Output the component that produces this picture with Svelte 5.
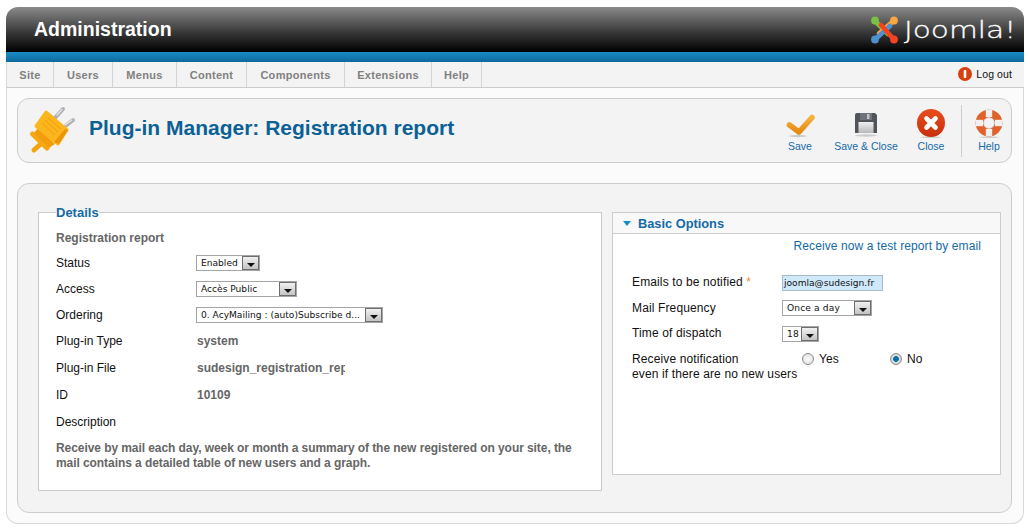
<script>
  const nav = [['Site',47],['Users',59],['Menus',64],['Content',70],['Components',98],['Extensions',87],['Help',50]];
</script>

<div class="page">
  <header class="head">
    <h1>Administration</h1>
    <div class="logo">
      <svg class="jm" width="29" height="30" viewBox="0 0 29 30" fill="none" stroke-width="4.6" stroke-linecap="round">
        <path d="M5 6 L18 19" stroke="#7ac143"/>
        <circle cx="5" cy="5.5" r="3.9" fill="#7ac143"/>
        <path d="M24 5.5 L9 18.5" stroke="#f9a541"/>
        <circle cx="24" cy="5.5" r="3.9" fill="#f9a541"/>
        <path d="M5 24.5 L20 11" stroke="#5091cd"/>
        <circle cx="5" cy="24.5" r="3.9" fill="#5091cd"/>
        <path d="M24 24.5 L11 10" stroke="#f44321"/>
        <circle cx="24" cy="24.5" r="3.9" fill="#f44321"/>
      </svg>
      <span class="jt">Joomla!</span>
    </div>
  </header>
  <div class="strip"></div>
  <nav class="nav">
    <ul>
      {#each nav as [n, w]}
        <li style="width:{w}px">{n}</li>
      {/each}
    </ul>
    <div class="logout">
      <svg width="14" height="14" viewBox="0 0 14 14"><circle cx="7" cy="7" r="7" fill="#d8400f"/><rect x="5.7" y="3" width="2.6" height="8" rx="1" fill="#fff"/></svg>
      <span>Log out</span>
    </div>
  </nav>

  <main class="main">
    <section class="toolbar">
      <svg class="plug" width="48" height="48" viewBox="0 0 48 48">
        <g stroke-linecap="round">
          <path d="M27 12 L35 3" stroke="#b0b0b0" stroke-width="4"/>
          <path d="M35 22 L45 14" stroke="#b0b0b0" stroke-width="4"/>
          <path d="M29 9 L34 3.5 M37 19 L44 14" stroke="#e8e8e8" stroke-width="1.2"/>
        </g>
        <path d="M15 36 L6 44" stroke="#f5a20f" stroke-width="5" stroke-linecap="round"/>
        <path d="M4.5 28 L19 42" stroke="#f7a712" stroke-width="5" stroke-linecap="round"/>
        <path d="M10 22 L27 38 L21 42 L6 27 Z" fill="#f29d0c"/>
        <path d="M18 6 L39 24 L30 38 L8 20 Z" fill="#fcb61d" stroke="#fcb61d" stroke-width="3" stroke-linejoin="round"/>
        <path d="M17 14 L30 26 M20 12 L33 23 M14 17 L27 29" stroke="#f09c0c" stroke-width="1"/>
        <path d="M40 24 L31 38 L26 36 L37 23 Z" fill="#ee9409"/>
      </svg>
      <h2>Plug-in Manager: Registration report</h2>
      <div class="actions">
        <div class="act save">
          <svg width="30" height="30" viewBox="0 0 30 30"><defs><linearGradient id="o" x1="0" y1="0" x2="0" y2="1"><stop offset="0" stop-color="#f6b23e"/><stop offset="1" stop-color="#e58a12"/></linearGradient></defs><ellipse cx="13" cy="28" rx="9" ry="1.2" fill="#ccc"/><path d="M4.5 17 L14 24 L27 9.5" fill="none" stroke="url(#o)" stroke-width="5.6" stroke-linecap="round" stroke-linejoin="round"/></svg>
          <span>Save</span>
        </div>
        <div class="act saveclose">
          <svg width="30" height="30" viewBox="0 0 30 30"><defs><linearGradient id="g" x1="0" y1="0" x2="0" y2="1"><stop offset="0" stop-color="#f0f0f0"/><stop offset="1" stop-color="#b8b8b8"/></linearGradient></defs><ellipse cx="15" cy="27.5" rx="11" ry="1.2" fill="#ccc"/><path d="M4 7 Q4 5 6 5 H24 L26 7 V25 H4 Z" fill="#50555b"/><rect x="9" y="5" width="12" height="7" fill="#6f747a"/><rect x="16" y="6" width="2.5" height="5" fill="#c4c4c4"/><rect x="7.5" y="14" width="15" height="11" fill="url(#g)"/></svg>
          <span>Save &amp; Close</span>
        </div>
        <div class="act close">
          <svg width="30" height="30" viewBox="0 0 30 30"><defs><linearGradient id="r" x1="0" y1="0" x2="0" y2="1"><stop offset="0" stop-color="#ea4d1d"/><stop offset="1" stop-color="#c6300c"/></linearGradient></defs><ellipse cx="15" cy="29.2" rx="11" ry="0.8" fill="#ccc"/><circle cx="15" cy="15" r="14" fill="url(#r)"/><path d="M10.5 10.5 L19.5 19.5 M19.5 10.5 L10.5 19.5" stroke="#fff" stroke-width="4.6" stroke-linecap="round"/></svg>
          <span>Close</span>
        </div>
        <div class="act help">
          <svg width="30" height="30" viewBox="0 0 30 30"><ellipse cx="15" cy="29.2" rx="10" ry="0.8" fill="#ccc"/><circle cx="15" cy="15" r="13.5" fill="#ddd"/><circle cx="15" cy="15" r="9.4" fill="none" stroke="#e0622a" stroke-width="7.8"/><g stroke="#f0f0f0" stroke-width="6.4" fill="none"><path d="M15 2 V9"/><path d="M15 21 V28"/><path d="M2 15 H9"/><path d="M21 15 H28"/></g><circle cx="15" cy="15" r="5.4" fill="#f3f3f3" stroke="#ccc" stroke-width=".6"/></svg>
          <span>Help</span>
        </div>
      </div>
    </section>

    <section class="content">
      <div class="col-left">
        <fieldset class="details">
          <legend>Details</legend>
          <div class="title">Registration report</div>
          <div class="row"><span class="lbl">Status</span><div class="sel" style="width:64px"><span>Enabled</span><i></i></div></div>
          <div class="row"><span class="lbl">Access</span><div class="sel" style="width:101px"><span>Accès Public</span><i></i></div></div>
          <div class="row"><span class="lbl">Ordering</span><div class="sel" style="width:187px"><span>0. AcyMailing : (auto)Subscribe d...</span><i></i></div></div>
          <div class="row"><span class="lbl">Plug-in Type</span><span class="val">system</span></div>
          <div class="row tall"><span class="lbl">Plug-in File</span><span class="val clip">sudesign_registration_report</span></div>
          <div class="row tall"><span class="lbl">ID</span><span class="val">10109</span></div>
          <div class="row tall"><span class="lbl">Description</span></div>
          <p class="desc">Receive by mail each day, week or month a summary of the new registered on your site, the mail contains a detailed table of new users and a graph.</p>
        </fieldset>
      </div>
      <div class="panel">
        <div class="ptitle"><i class="tri"></i>Basic Options</div>
        <div class="pbody">
          <div class="test">Receive now a test report by email</div>
          <div class="row2"><span class="lbl2">Emails to be notified <b>*</b></span><span class="inp">joomla@sudesign.fr</span></div>
          <div class="row2"><span class="lbl2">Mail Frequency</span><div class="sel" style="width:90px"><span>Once a day</span><i></i></div></div>
          <div class="row2"><span class="lbl2">Time of dispatch</span><div class="sel" style="width:37px"><span>18</span><i></i></div></div>
          <div class="row2 radio">
            <span class="lbl2">Receive notification<br>even if there are no new users</span>
            <div class="radios">
              <span class="r off"></span><span class="rl">Yes</span>
              <span class="r on"></span><span class="rl">No</span>
            </div>
          </div>
        </div>
      </div>
    </section>
  </main>
</div>

<style>
  :global(body){margin:0;background:#fff;font-family:"Liberation Sans",Arial,sans-serif;font-size:12px;color:#111}
  .page{width:1018px;height:517px;margin:7px 0 0 6px;box-sizing:border-box;display:flex;flex-direction:column}
  .head{height:45px;flex:none;border-radius:12px 12px 0 0;background:linear-gradient(#8a8a8a,#3a3a3a 55%,#000);display:flex;align-items:center;justify-content:space-between;padding:0 10px 0 28px}
  h1{margin:0 0 1px;font-size:19.5px;font-weight:bold;color:#fff;line-height:42px}
  .logo{display:flex;align-items:center}
  .jt{display:inline-block;width:110px;margin-left:5px;font-family:"DejaVu Sans",sans-serif;font-weight:200;font-size:23.5px;color:#fff;white-space:nowrap;transform:scaleX(1.26);transform-origin:left center;-webkit-text-stroke:.3px #fff}
  .strip{height:10px;flex:none;background:linear-gradient(#1a8cc4,#0d6a9f)}
  .nav{height:25px;flex:none;background:#f3f3f3;border-bottom:1px solid #ccc;border-left:1px solid #d8d8d8;display:flex;justify-content:space-between;align-items:center;padding-right:12px}
  .nav ul{margin:0;padding:0;list-style:none;display:flex;height:100%}
  .nav li{box-sizing:border-box;border-right:1px solid #d4d4d4;display:flex;align-items:center;justify-content:center;font-weight:bold;font-size:11px;color:#808080;letter-spacing:.3px}
  .logout{display:flex;align-items:center;gap:4px;font-size:10.5px;letter-spacing:.1px;color:#111;margin-top:-2px}
  .main{flex:1;background:#fbfbfb;border:1px solid #d8d8d8;border-top:0;border-radius:0 0 12px 12px;padding:10px 11px 10px 10px;display:flex;flex-direction:column;gap:20px}
  .toolbar{height:65px;box-sizing:border-box;flex:none;background:#f3f3f3;border:1px solid #ccc;border-radius:12px;display:flex;align-items:center;padding:0 0 0 10px}
  .plug{margin-right:13px;margin-top:-1px;flex:none}
  h2{margin:-5px 0 0;font-size:21px;font-weight:bold;color:#0b6196;white-space:nowrap}
  .actions{margin-left:auto;display:flex;align-items:flex-start;height:52px}
  .act{display:flex;flex-direction:column;align-items:center;font-size:10.5px;color:#146aa5;height:52px;padding-top:3px;box-sizing:border-box}
  .act svg{display:block;flex:none}
  .act span{white-space:nowrap;margin-top:2px;line-height:12px}
  .save{width:30px;margin-right:18px}
  .saveclose{width:66px;margin-right:17px}
  .close{width:30px;margin-right:15px}
  .help{width:50px;border-left:1px solid #ccc;box-sizing:border-box;padding-left:5px}
  .content{flex:1;background:#f3f3f3;border:1px solid #ccc;border-radius:12px;padding:28px 10px 0 20px;display:flex;gap:10px;align-items:flex-start}
  .col-left{width:564px;flex:none;margin-top:-7px}
  .details{margin:0;box-sizing:border-box;width:564px;min-width:0;height:286px;background:#fff;border:1px solid #ccc;padding:0 17px}
  legend{padding:0;margin:0;font-size:13px;font-weight:bold;color:#146aa5;line-height:15px}
  .title{font-weight:bold;color:#666;margin-top:5px;line-height:26px;height:25px}
  .row{display:flex;align-items:center;height:26px}
  .tall{height:27px}
  .lbl{width:141px;flex:none;white-space:nowrap}
  .row .sel{margin-left:-1px}
  .val{font-weight:bold;color:#666}
  .clip{width:148px;overflow:hidden;white-space:nowrap}
  .desc{margin:6px 0 0;font-weight:bold;color:#666;line-height:15px;letter-spacing:-.07px}
  .sel{box-sizing:border-box;height:16px;border:1px solid #a5a5a5;background:#fff;display:flex;align-items:center;justify-content:space-between;font-family:"DejaVu Sans",sans-serif;font-size:9.1px;color:#111;padding-left:4px}
  .sel span{white-space:nowrap;overflow:hidden}
  .sel i{width:17px;height:14px;box-sizing:border-box;border:1px solid #6e6e6e;background:linear-gradient(#f0f0f0,#c4c4c4);flex:none;position:relative}
  .sel i::after{content:"";position:absolute;left:4px;top:6px;border:4px solid transparent;border-top:4px solid #111;border-bottom:0}
  .panel{width:389px;height:263px;box-sizing:border-box;background:#fff;border:1px solid #ccc;flex:none}
  .ptitle{height:21px;box-sizing:border-box;background:#f8f8f8;border-bottom:1px solid #ccc;font-size:12.8px;font-weight:bold;color:#146aa5;display:flex;align-items:center;padding-left:10px}
  .tri{width:0;height:0;border:4px solid transparent;border-top:5px solid #1a8cc4;border-bottom:0;margin-right:7px}
  .pbody{padding:0 19px;letter-spacing:.13px}
  .test{text-align:right;color:#146aa5;line-height:25px;height:25px;margin-bottom:11px;letter-spacing:.1px}
  .row2{display:flex;align-items:center;height:25.6px}
  .lbl2{width:150px;flex:none;white-space:nowrap;line-height:15px}
  .lbl2 b{color:#f08c1e;font-weight:normal}
  .inp{box-sizing:border-box;width:101px;height:16px;border:1px solid #a8bcc8;background:#cfe9fb;font-family:"DejaVu Sans",sans-serif;font-size:9.1px;line-height:14px;padding-left:1px;white-space:nowrap;letter-spacing:0}
  .radio{align-items:flex-start;height:32px;padding-top:5px}
  .radios{display:flex;align-items:center;margin-left:20px;height:15px}
  .r{width:12px;height:12px;border-radius:50%;box-sizing:border-box;border:1px solid #8c8c8c;background:radial-gradient(#fff,#d8d8d8);flex:none}
  .on{background:radial-gradient(circle,#0d6fa8 0 2.6px,#e8e8e8 3.2px,#ccc 5px)}
  .rl{margin-left:5px;width:71px}
</style>
